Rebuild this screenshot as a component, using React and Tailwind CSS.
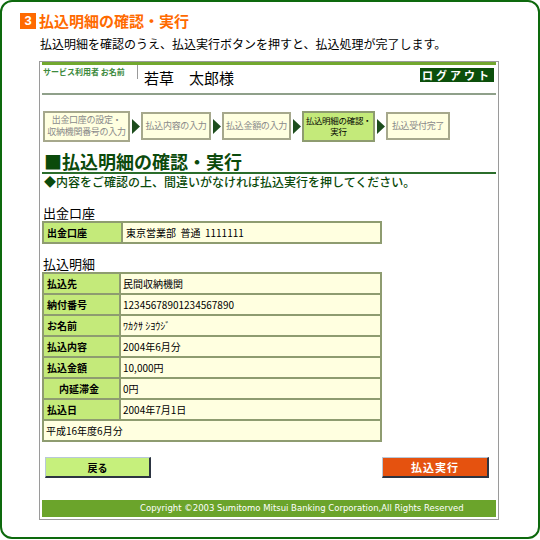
const jp = { fontFamily: '"Noto Sans CJK JP", "Liberation Sans", sans-serif' }

const steps = [
  { label: ['出金口座の設定・', '収納機関番号の入力'], w: 'w-[87px]', h: 'h-[31px]' },
  { label: ['払込内容の入力'], w: 'w-[70px]', h: 'h-[28px]' },
  { label: ['払込金額の入力'], w: 'w-[69px]', h: 'h-[28px]' },
  { label: ['払込明細の確認・', '実行'], w: 'w-[73px]', h: 'h-[31px]', active: true },
  { label: ['払込受付完了'], w: 'w-[64px]', h: 'h-[28px]' },
]

const rows = [
  ['払込先', '民間収納機関'],
  ['納付番号', '12345678901234567890'],
  ['お名前', 'ﾜｶｸｻ ｼﾖｳｼﾞ'],
  ['払込内容', '2004年6月分'],
  ['払込金額', '10,000円'],
  ['内延滞金', '0円', true],
  ['払込日', '2004年7月1日'],
]

function Arrow() {
  return (
    <svg width="8" height="15" viewBox="0 0 8 15" className="ml-[2px] mr-[1px] shrink-0">
      <polygon points="0,0 8,7.5 0,15" fill="#1d4d1d" />
    </svg>
  )
}

function Step({ step }) {
  return (
    <div
      className={`${step.w} ${step.h} shrink-0 flex flex-col items-center justify-center border-2 whitespace-nowrap tracking-[-0.3px] ${
        step.active
          ? 'bg-[#c4ea7a] border-[#8e9c70] text-black text-[8.5px] leading-[11px]'
          : 'bg-[#ffffe0] border-[#a6a88c] text-[#8a8a8a] text-[9px] leading-[12px]'
      }`}
    >
      {step.label.map(l => <span key={l}>{l}</span>)}
    </div>
  )
}

export default function App() {
  return (
    <div className="w-[540px] h-[540px] bg-white" style={jp}>
      <div className="w-[540px] h-[539px] border-2 border-[#0d690d] rounded-[12px] pt-[10px]">
        <div className="flex items-center ml-[18px] h-[17px]">
          <div className="w-4 h-4 bg-[#ff6a00] text-white font-bold text-[13px] leading-none flex items-center justify-center" style={{ fontFamily: '"Liberation Sans", sans-serif' }}>3</div>
          <span className="ml-[3px] text-[15px] leading-none font-bold text-[#ff6a00]">払込明細の確認・実行</span>
        </div>
        <p className="ml-[38px] mt-[8px] text-[12px] leading-[14px] text-black">
          払込明細を確認のうえ、払込実行ボタンを押すと、払込処理が完了します。
        </p>

        <div className="ml-[37px] mt-[10px] w-[460px] h-[459px] border border-[#9a9a9a] px-[2px] flex flex-col">
          <div className="h-[3px] bg-[#72a82e]" />
          <div className="h-[28px] flex items-start">
            <span className="w-[95px] pt-[2px] pl-[1px] text-[8px] leading-[10px] font-bold text-[#3d8a3d]">サービス利用者 お名前</span>
            <div className="w-px h-[14px] bg-[#9a9a9a]" />
            <span className="ml-[6px] mt-[4px] text-[15px] leading-[18px] text-black">若草　太郎様</span>
            <div className="ml-auto mr-[2px] mt-[3px] w-[74px] h-[14px] bg-[#0b4f0b] text-white text-[11px] leading-[14px] font-bold tracking-[3px] text-center">
              ログアウト
            </div>
          </div>
          <div className="h-[2px] bg-[#8fa08a]" />

          <div className="mt-[15px] flex items-center h-[32px] pl-[1px]">
            {steps.map((s, i) => (
              <div key={i} className="flex items-center">
                {i > 0 && <Arrow />}
                <Step step={s} />
              </div>
            ))}
          </div>

          <h1 className="mt-[8px] pl-[2px] text-[18px] leading-[22px] font-bold text-[#0b4a0b]">■払込明細の確認・実行</h1>
          <div className="h-[2px] bg-[#2b6d2b]" />
          <p className="pl-[2px] text-[12px] leading-[16px] font-medium text-[#0b4a0b]">◆内容をご確認の上、間違いがなければ払込実行を押してください。</p>

          <h2 className="mt-[15px] pl-[1px] text-[13px] leading-[16px] text-black">出金口座</h2>
          <table className="w-[340px] border-collapse">
            <tbody>
              <tr className="h-[21px]">
                <td className="w-[79px] border-2 border-[#8e9c70] bg-[#c4ea7a] pl-[3px] text-[10px] font-bold leading-none">出金口座</td>
                <td className="border-2 border-[#8e9c70] bg-[#ffffe0] pl-[3px] text-[10px] leading-none">東京営業部&nbsp;&nbsp;普通&nbsp;&nbsp;1111111</td>
              </tr>
            </tbody>
          </table>

          <h2 className="mt-[12px] pl-[1px] text-[13px] leading-[16px] text-black">払込明細</h2>
          <table className="w-[340px] border-collapse">
            <tbody>
              {rows.map(([k, v, indent]) => (
                <tr key={k} className="h-[21px]">
                  <td className={`w-[77px] border-2 border-[#8e9c70] bg-[#c4ea7a] text-[10px] font-bold leading-none ${indent ? 'pl-[15px]' : 'pl-[3px]'}`}>{k}</td>
                  <td className="border-2 border-[#8e9c70] bg-[#ffffe0] pl-[2px] text-[10px] leading-none">{v}</td>
                </tr>
              ))}
              <tr className="h-[21px]">
                <td colSpan={2} className="border-2 border-[#8e9c70] bg-[#ffffe0] pl-[2px] text-[10px] leading-none">平成16年度6月分</td>
              </tr>
            </tbody>
          </table>

          <div className="mt-[15px] flex items-center justify-between pl-[3px] pr-[7px]">
            <button className="w-[106px] h-[21px] bg-[#c6f07c] border-t border-l border-[#b8c8d8] border-b-2 border-r-2 border-b-[#2c3442] border-r-[#2c3442] text-[10px] font-bold text-black">戻る</button>
            <button className="w-[107px] h-[21px] bg-[#e5520f] border-t border-l border-[#b8c8d8] border-b-2 border-r-2 border-b-[#2c3442] border-r-[#2c3442] text-[11px] font-bold text-white tracking-[1px]">払込実行</button>
          </div>

          <div className="mt-auto mb-[2px] h-[17px] bg-[#6ba42b] text-white text-[8.5px] leading-[17px] pl-[98px]" style={{ fontFamily: '"DejaVu Sans", sans-serif' }}>
            Copyright ©2003 Sumitomo Mitsui Banking Corporation,All Rights Reserved
          </div>
        </div>
      </div>
    </div>
  )
}
